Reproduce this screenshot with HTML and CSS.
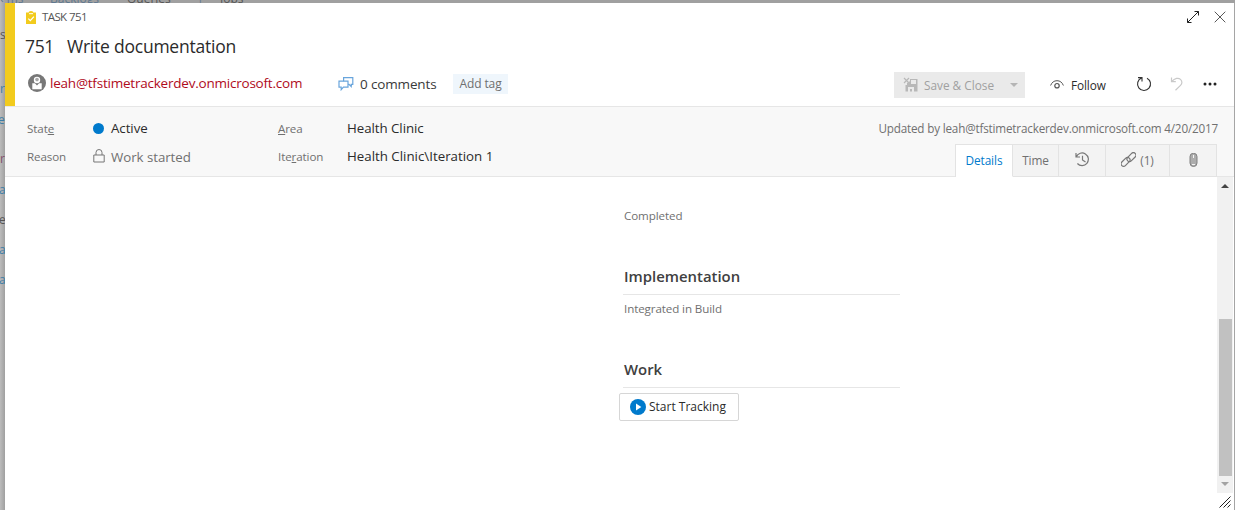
FILE: index.html
```html
<!DOCTYPE html>
<html lang="en">
<head>
<meta charset="utf-8">
<title>Task 751</title>
<link rel="stylesheet" href="styles.css">
</head>
<body>
<div class="backdrop">
  <span class="bt" style="left:0;top:-10px">‹ ms</span>
  <span class="bt" style="left:50px;top:-10px">Backlogs</span>
  <span class="bt dark" style="left:127px;top:-10px">Queries</span>
  <span class="bt" style="left:197px;top:-10px">|</span>
  <span class="bt dark" style="left:220px;top:-10px">Jobs</span>
  <span class="bt dark" style="left:0;top:26px">s</span>
  <span class="bt blue" style="left:0;top:80px">r</span>
  <span class="bt blue" style="left:-2px;top:111px">es</span>
  <span class="bt plum" style="left:0;top:150px">r</span>
  <span class="bt blue" style="left:-1px;top:181px">a</span>
  <span class="bt dark" style="left:-1px;top:211px">e</span>
  <span class="bt blue" style="left:-1px;top:241px">a</span>
  <span class="bt blue" style="left:-1px;top:271px">a</span>
</div>
<main class="dialog">
  <header class="head">
    <div class="row caption">
      <svg class="i-task" width="10" height="13" viewBox="0 0 10 13"><path fill="#f2cb1d" d="M0 1.5h2.800V.8Q5-.8 7.200.8v.7H10V13H0z"/><path d="M3 2.700h4" stroke="#fff" stroke-width="1"/><path d="M2.300 7.600l2 2 3.600-4" fill="none" stroke="#fff" stroke-width="1.200"/></svg>
      <span class="t-task">TASK 751</span>
      <span class="grow"></span>
      <svg class="i-expand" width="14" height="14" viewBox="0 0 14 14" fill="none" stroke="#222" stroke-width="1"><path d="M1.500 12.500l11-11M8.500 1.500h4v4M1.500 8.500v4h4"/></svg>
      <svg width="12" height="12" viewBox="0 0 12 12" fill="none" stroke="#444" stroke-width=".9"><path d="M.7.7l10.600 10.600M11.300.7L.7 11.300"/></svg>
    </div>
    <div class="row title"><span class="t-id">751</span><span class="t-title">Write documentation</span></div>
    <div class="row tools">
      <svg class="i-user" width="18" height="18" viewBox="0 0 18 18"><circle cx="9" cy="9" r="9" fill="#777"/><path fill="#fff" d="M4.300 9.300H7L9 11.500l2-2.200h2.700V15.300H4.300z"/><circle cx="9" cy="6" r="3.200" fill="#fff"/><circle cx="9" cy="5.600" r="1.800" fill="#a8a8a8"/></svg>
      <span class="t-mail">leah@tfstimetrackerdev.onmicrosoft.com</span>
      <svg class="i-chat" width="16" height="14" viewBox="0 0 16 14" fill="#fff" stroke="#69a5dc" stroke-width="1.200"><path d="M5.600.7h9.200v6.600h-1.600v2.200l-2.200-2.200H5.600z"/><path d="M1 4.200h9v6H5.400L3.200 12.700v-2.500H1z"/></svg>
      <span class="t-comments">0 comments</span>
      <span class="tag"><span class="t-tag">Add tag</span></span>
      <span class="grow"></span>
      <span class="save">
        <svg width="15" height="15" viewBox="0 0 15 15"><path fill="#b8b8b8" d="M7 2h7.500v12.500h-12V8H4V5.800h1.200L7 4zM8 3v4h5V3zM5 10v4.500h2V12h2v2.500h2V10z" fill-rule="evenodd"/><path d="M1 1l5 5M6 1L1 6" stroke="#b8b8b8" stroke-width="1.200"/></svg>
        <span class="t-save">Save &amp; Close</span>
        <svg class="i-drop" width="8" height="4" viewBox="0 0 8 4"><path fill="#b5b5b5" d="M0 0h8L4 4z"/></svg>
      </span>
      <svg class="i-eye" width="14" height="9" viewBox="0 0 14 9" fill="none" stroke="#555"><path d="M.6 5.500Q2.500.7 7 .7t6.400 4.800" stroke-width="1"/><circle cx="7" cy="5.700" r="2.200" stroke-width="1.200"/></svg>
      <span class="t-follow">Follow</span>
      <svg class="i-refresh" width="16" height="16" viewBox="0 0 16 16" fill="none" stroke="#333" stroke-width="1.100"><path d="M11 2.200A6.500 6.500 0 1 1 5.500 2M2 1.600h4v4"/></svg>
      <svg class="i-undo" width="13" height="14" viewBox="0 0 13 14" fill="none" stroke="#c9c9c9" stroke-width="1.200"><path d="M1.500.5v4.200h4.300M1.500 4.700C5 1 8.500.5 10.500 2.400c2 2 1.700 4.300 0 6L5.500 13.300"/></svg>
      <svg class="i-more" width="14" height="4" viewBox="0 0 14 4" fill="#222"><circle cx="2" cy="2" r="1.500"/><circle cx="7" cy="2" r="1.500"/><circle cx="12" cy="2" r="1.500"/></svg>
    </div>
  </header>
  <section class="band">
    <div class="fields">
      <span class="lbl">Stat<u>e</u></span>
      <span class="val"><i class="dot"></i>Active</span>
      <span class="lbl"><u>A</u>rea</span>
      <span class="val">Health Clinic</span>
      <span class="lbl">Reason</span>
      <span class="val muted"><svg class="lock" width="12" height="14" viewBox="0 0 12 14" fill="none" stroke="#777"><path d="M.8 6h10.400v7H.8zM3 6V3.500a3 3 0 0 1 6 0V6"/></svg>Work started</span>
      <span class="lbl iter">Ite<u>r</u>ation</span>
      <span class="val iter">Health Clinic\Iteration 1</span>
    </div>
    <div class="side">
      <span class="t-updated">Updated by leah@tfstimetrackerdev.onmicrosoft.com 4/20/2017</span>
      <nav class="tabs">
        <span class="tab active">Details</span>
        <span class="tab time">Time</span>
        <span class="tab hist"><svg width="15" height="15" viewBox="0 0 15 15" fill="none" stroke="#777" stroke-width="1.200"><path d="M1 1v4h4M1.300 4.700A6.300 6.300 0 1 1 2.400 11.500M7.500 3.800v4.200l3 2"/></svg></span>
        <span class="tab link"><svg width="15" height="15" viewBox="0 0 15 15" fill="none" stroke="#777" stroke-width="1.200"><g transform="rotate(-45 7.500 7.500)"><rect x="-1.500" y="4.600" width="10.500" height="5" rx="2.500"/><rect x="6" y="5.400" width="10.500" height="5" rx="2.500"/></g></svg><span class="t-count">(1)</span></span>
        <span class="tab clip"><svg width="9" height="14" viewBox="0 0 9 14" fill="none" stroke="#808080" stroke-width="1"><path d="M8 3.500v6.500a3.500 3.500 0 0 1-7 0V3.500a3.300 3 0 0 1 7 0z" fill="#acacac"/><path d="M4.500 2v3M3 11.500h3" stroke="#f3f3f3"/></svg></span>
      </nav>
    </div>
  </section>
  <section class="content">
    <div class="column">
      <span class="lbl completed">Completed</span>
      <h2 class="h-impl">Implementation</h2>
      <span class="lbl build">Integrated in Build</span>
      <h2 class="h-work">Work</h2>
      <span class="button"><svg width="16" height="16" viewBox="0 0 16 16"><circle cx="8" cy="8" r="8" fill="#007acc"/><path fill="#fff" d="M6 4.500L11.300 8 6 11.500z"/></svg><span class="t-start">Start Tracking</span></span>
    </div>
    <div class="rail">
      <div class="scroll">
        <svg width="8" height="4" viewBox="0 0 8 4"><path fill="#444" d="M0 4h8L4 0z"/></svg>
        <div class="thumb"></div>
        <svg width="8" height="4" viewBox="0 0 8 4"><path fill="#a3a3a3" d="M0 0h8L4 4z"/></svg>
      </div>
      <svg class="grip" width="12" height="12" viewBox="0 0 12 12" stroke="#222" stroke-width="1"><path d="M.5 11.500l11-11M4.500 11.500l7-7M8.500 11.500l3-3"/></svg>
    </div>
  </section>
</main>
</body>
</html>
```

FILE: styles.css
```css
* { box-sizing: border-box; }
body { margin: 0; width: 1235px; height: 510px; overflow: hidden; position: relative; background: #a9a9a9; font: 11.5px/16px "Open Sans", "Noto Sans", sans-serif; color: #2b2b2b; }
svg { display: block; flex: none; }
.backdrop { position: absolute; inset: 0; overflow: hidden; background: linear-gradient(90deg, #bcbcbc, #a0a0a0 5px); }
.bt { position: absolute; font-size: 12px; line-height: 18px; color: #5f7890; white-space: nowrap; }
.dark { color: #555; }
.blue { color: #3d7da6; }
.plum { color: #82506b; }
.dialog { position: relative; width: 1230px; height: 507px; margin: 3px 0 0 5px; background: #fff; border-right: 1px solid #a5a5a5; display: flex; flex-direction: column; white-space: nowrap; }
.head { height: 103px; border-left: 10px solid #f2cb1d; flex: none; }
.row { display: flex; align-items: center; }
.grow { flex: 1; }
.caption { height: 28px; padding: 0 8px 0 11px; }
.t-task { margin-left: 6px; font-size: 11.5px; letter-spacing: -0.6px; color: #555; }
.i-expand { margin-right: 14px; }
.title { height: 30px; padding-left: 10px; font-size: 17.5px; line-height: 24px; }
.t-id { width: 42px; letter-spacing: -0.35px; }
.t-title { letter-spacing: -0.23px; }
.tools { height: 45px; padding: 0 17px 0 13px; }
.i-user { margin-top: -1px; }
.t-mail { margin-left: 4px; width: 252px; font-size: 13.5px; letter-spacing: -0.22px; color: #b00b1c; margin-top: -1px; }
.i-chat { margin-left: 36px; }
.t-comments { margin-left: 6px; width: 77px; font-size: 13.5px; letter-spacing: -0.15px; color: #3a3a3a; }
.tag { margin-left: 16px; width: 55px; height: 20px; background: #eff6fc; color: #707070; display: flex; align-items: center; justify-content: center; font-size: 12px; letter-spacing: -0.1px; }
.save { width: 131px; height: 26px; margin-top: 2px; background: #eaeaea; color: #a0a0a0; display: flex; align-items: center; padding: 0 7px 0 9px; }
.t-save { margin-left: 6px; flex: 1; font-size: 11.8px; }
.i-eye { margin-left: 25px; margin-top: 2px; }
.t-follow { margin-left: 7px; width: 36px; margin-top: 2px; font-size: 11.8px; letter-spacing: -0.1px; }
.i-refresh { margin-left: 29px; margin-top: 1px; }
.i-undo { margin-left: 18px; margin-top: 1px; }
.i-more { margin-left: 20px; margin-top: 1px; }
.band { height: 71px; flex: none; background: #f8f8f8; border: solid #e6e6e6; border-width: 1px 0; display: flex; justify-content: space-between; padding: 0 16px 0 22px; }
.fields { display: grid; grid-template-columns: 66px 185px 69px 200px; grid-template-rows: 29px 28px; padding-top: 7px; align-items: center; align-content: start; }
.lbl { color: #707070; font-size: 11.6px; letter-spacing: -0.1px; }
.val { font-size: 13.3px; letter-spacing: -0.05px; display: flex; align-items: center; margin-top: -1px; }
.lbl.iter { margin-top: -1px; }
.val.iter { margin-top: -3px; letter-spacing: 0; }
.muted { color: #707070; }
.dot { width: 11px; height: 11px; border-radius: 50%; background: #007acc; margin-right: 7px; }
.lock { margin-right: 6px; margin-top: -2px; }
.side { display: flex; flex-direction: column; align-items: flex-end; justify-content: space-between; }
.t-updated { margin-top: 13px; color: #707070; font-size: 11.7px; letter-spacing: -0.18px; }
.tabs { display: flex; height: 33px; margin: 0 1px -1px 0; border: 1px solid #e3e3e3; border-bottom: 0; color: #707070; font-size: 11.8px; letter-spacing: -0.1px; }
.tab { display: flex; align-items: center; justify-content: center; background: #f3f3f3; border-right: 1px solid #e3e3e3; border-bottom: 1px solid #e3e3e3; padding-bottom: 2px; }
.tab:last-child { border-right: 0; }
.active { width: 57px; background: #fff; border-bottom-color: #fff; color: #007acc; }
.time { width: 46px; }
.hist { width: 47px; }
.link { width: 64px; gap: 4px; }
.clip { width: 46px; }
.content { flex: 1; display: flex; justify-content: space-between; }
.column { margin-left: 614px; width: 281px; padding: 31px 0 0 5px; display: flex; flex-direction: column; }
h2 { margin: 0 0 0 -1px; width: 277px; padding-left: 1px; height: 28px; border-bottom: 1px solid #e6e6e6; font-size: 14.9px; line-height: 18px; font-weight: 600; color: #404040; }
.h-impl { margin-top: 43px; }
.build { margin-top: 6px; }
.h-work { margin-top: 43px; }
.button { width: 120px; height: 28px; margin: 5px 0 0 -5px; border: 1px solid #d6d6d6; border-radius: 2px; display: flex; align-items: center; padding-left: 10px; gap: 3px; }
.t-start { font-size: 12px; }
.rail { width: 17px; display: flex; flex-direction: column; }
.scroll { height: 316px; width: 16px; background: #f1f1f1; display: flex; flex-direction: column; align-items: center; padding-top: 7px; }
.thumb { width: 13px; height: 157px; margin: 131px 0 6px; background: #c1c1c1; }
.grip { margin: 3px 0 0 2px; }
```
